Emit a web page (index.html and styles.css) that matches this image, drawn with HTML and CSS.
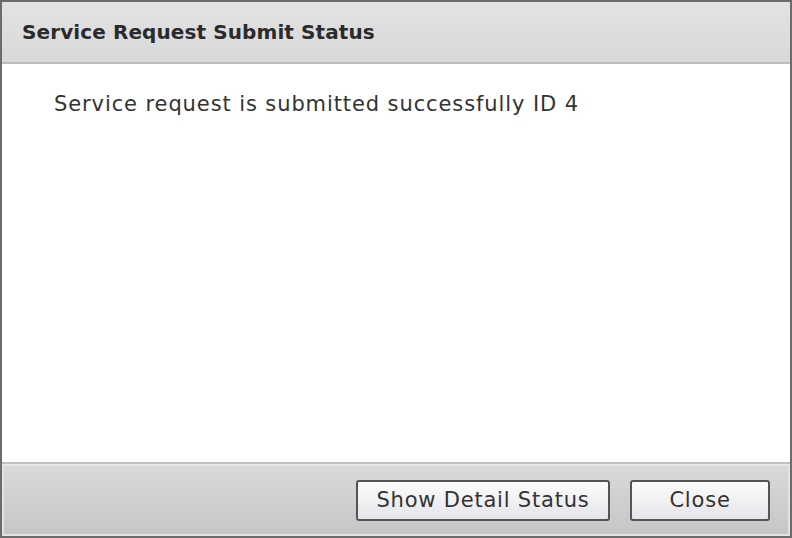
FILE: index.html
```html
<!DOCTYPE html>
<html>
<head>
<meta charset="utf-8">
<link rel="stylesheet" href="styles.css">
</head>
<body>
<div class="dialog">
  <div class="header"><span class="title">Service Request Submit Status</span></div>
  <div class="content"><p class="message">Service request is submitted successfully ID 4</p></div>
  <div class="footer">
    <button class="btn btn-detail">Show Detail Status</button>
    <button class="btn btn-close">Close</button>
  </div>
</div>
</body>
</html>
```
FILE: styles.css
```css
html, body {
  margin: 0;
  padding: 0;
  background: #6c6c6c;
}
.dialog {
  width: 792px;
  height: 538px;
  box-sizing: border-box;
  border: 2px solid #6c6c6c;
  display: flex;
  flex-direction: column;
  font-family: "DejaVu Sans", Verdana, sans-serif;
  background: #fff;
}
.header {
  height: 62px;
  box-sizing: border-box;
  border-bottom: 2px solid #bdbdbd;
  background: linear-gradient(#e3e3e3, #d8d8d8);
  display: flex;
  align-items: center;
  padding: 0 0 0 20px;
}
.title {
  font-weight: bold;
  font-size: 20px;
  letter-spacing: 0.1px;
  color: #2b2b2b;
}
.content {
  flex: 1;
  background: #fff;
  padding: 0 0 0 52px;
}
.message {
  margin: 28px 0 0 0;
  font-size: 21px;
  letter-spacing: 0.9px;
  color: #333;
}
.footer {
  height: 74px;
  box-sizing: border-box;
  border-top: 2px solid #bfbfbf;
  background: linear-gradient(#d9d9d9, #c6c6c6);
  box-shadow: inset 0 2px 0 #e6e6e6, inset 2px 0 0 #e2e2e2, inset -2px 0 0 #e2e2e2, inset 0 -2px 0 #e2e2e2;
  display: flex;
  justify-content: flex-end;
  align-items: center;
  padding: 0 20px 0 0;
  gap: 20px;
}
.btn {
  height: 41px;
  box-sizing: border-box;
  border: 2px solid #555;
  border-radius: 3px;
  background: linear-gradient(#fbfbfb, #f1f1f3 50%, #e4e4ea);
  font-family: "DejaVu Sans", Verdana, sans-serif;
  font-size: 21px;
  letter-spacing: 0.8px;
  color: #333;
  padding: 0;
}
.btn-detail { width: 254px; }
.btn-close { width: 140px; }
```
